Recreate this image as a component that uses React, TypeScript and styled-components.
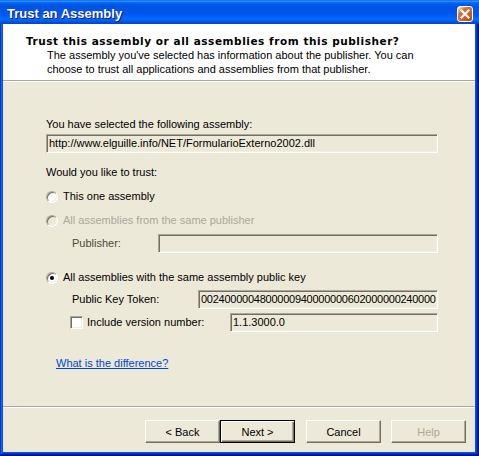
import React from "react";
import styled, { createGlobalStyle } from "styled-components";

const GlobalStyle = createGlobalStyle`
  html, body {
    margin: 0;
    padding: 0;
    background: #ece9d8;
  }
  body {
    font-family: "Liberation Sans", Arial, sans-serif;
    font-size: 11px;
    color: #000;
  }
`;

const Window = styled.div`
  width: 479px;
  height: 456px;
  display: flex;
  flex-direction: column;
  background: #0853dc;
  box-shadow: inset -1px -1px #00138c, inset 1px 0 #0831d9, inset -2px -2px #001ea0,
    inset 2px 0 #166aee, inset -3px -3px #003bda;
`;

const TitleBar = styled.div`
  height: 24px;
  flex: none;
  display: flex;
  align-items: center;
  justify-content: space-between;
  padding: 1px 6px 0 7px;
  box-sizing: border-box;
  background: linear-gradient(
    180deg,
    #0058ee 0%,
    #3593ff 4%,
    #288eff 6%,
    #127dff 8%,
    #036ffc 10%,
    #0262ee 14%,
    #0057e5 20%,
    #0054e3 24%,
    #0055eb 56%,
    #005bf5 66%,
    #026afe 76%,
    #0062ef 86%,
    #0052d6 92%,
    #0047c8 100%
  );
`;

const Caption = styled.span`
  font-family: "Liberation Sans", Arial, sans-serif;
  font-weight: bold;
  font-size: 13px;
  color: #fff;
  text-shadow: 1px 1px #0f1089;
  padding-top: 2px;
`;

const CloseButton = styled.div`
  width: 16px;
  height: 16px;
  box-sizing: border-box;
  border: 1px solid #fff;
  border-radius: 3px;
  background: radial-gradient(circle at 90% 90%, #cc4600 0%, #dc6527 55%, #cd7546 70%, #ffccb2 90%, #fff 100%);
  display: flex;
  align-items: center;
  justify-content: center;
  margin-top: 2px;
`;

const Dialog = styled.div`
  flex: 1;
  display: flex;
  flex-direction: column;
  margin: 0 4px 4px 3px;
  background: #ece9d8;
`;

const Header = styled.div`
  height: 56px;
  box-sizing: border-box;
  padding: 10px 0 0 23px;
  background: #fff;
  line-height: 14px;
`;

const HeaderTitle = styled.div`
  font-family: "DejaVu Sans", Verdana, sans-serif;
  font-weight: bold;
  font-size: 10.5px;
  letter-spacing: 0.55px;
`;

const HeaderText = styled.div`
  padding-left: 21px;
`;

const Separator = styled.div`
  height: 0;
  border-top: 1px solid #aca899;
  border-bottom: 1px solid #fff;
`;

const Content = styled.div`
  flex: 1;
  display: flex;
  flex-direction: column;
  padding-left: 43px;
  width: 392px;
`;

const Label = styled.div<{ $top: number }>`
  margin-top: ${(p) => p.$top}px;
  line-height: 13px;
`;

const Field = styled.div<{ $width: number; $tight?: boolean }>`
  width: ${(p) => p.$width}px;
  height: 19px;
  flex: none;
  box-sizing: border-box;
  border: 1px solid;
  border-color: #aca899 #fff #fff #aca899;
  box-shadow: inset 1px 1px #716f64, inset -1px -1px #f1efe2;
  padding: 0 2px;
  line-height: 17px;
  letter-spacing: ${(p) => (p.$tight ? "-0.25px" : "normal")};
  white-space: nowrap;
  overflow: hidden;
`;

const OptionRow = styled.label<{ $top: number; $disabled?: boolean }>`
  margin-top: ${(p) => p.$top}px;
  display: flex;
  align-items: center;
  gap: 5px;
  height: 13px;
  line-height: 13px;
  color: ${(p) => (p.$disabled ? "#aca899" : "#000")};
`;

const Radio = styled.span<{ $checked?: boolean; $disabled?: boolean }>`
  width: 12px;
  height: 12px;
  flex: none;
  box-sizing: border-box;
  border-radius: 50%;
  border: 1px solid;
  border-color: #aca899 #fff #fff #aca899;
  box-shadow: inset 1px 1px #716f64, inset -1px -1px #f1efe2;
  background: ${(p) => (p.$disabled ? "#ece9d8" : "#fff")};
  display: flex;
  align-items: center;
  justify-content: center;
  &::after {
    content: "";
    width: 4px;
    height: 4px;
    border-radius: 50%;
    background: ${(p) => (p.$checked ? "#000" : "transparent")};
  }
`;

const FieldRow = styled.div<{ $top: number }>`
  margin-top: ${(p) => p.$top}px;
  display: flex;
  align-items: center;
  padding-left: 26px;
  line-height: 13px;
  & > ${Field} {
    margin-left: auto;
  }
`;

const DimLabel = styled.span`
  color: #4b4b30;
`;

const Checkbox = styled.span`
  width: 13px;
  height: 13px;
  flex: none;
  box-sizing: border-box;
  margin-left: -2px;
  margin-right: 4px;
  border: 1px solid;
  border-color: #aca899 #fff #fff #aca899;
  box-shadow: inset 1px 1px #716f64, inset -1px -1px #f1efe2;
  background: #fff;
`;

const Link = styled.a`
  margin-top: 25px;
  margin-left: 10px;
  line-height: 13px;
  color: #0046d5;
  text-decoration: underline;
  cursor: pointer;
`;

const Footer = styled.div`
  display: flex;
  justify-content: flex-end;
  padding: 12px 9px 9px 0;
`;

const Button = styled.button<{ $default?: boolean; $gap?: number }>`
  width: 75px;
  height: 23px;
  margin-left: ${(p) => p.$gap ?? 0}px;
  padding: 0;
  font-family: "Liberation Sans", Arial, sans-serif;
  font-size: 11px;
  color: #000;
  background: #ece9d8;
  border: 1px solid;
  border-color: ${(p) => (p.$default ? "#000" : "#fff #716f64 #716f64 #fff")};
  box-shadow: ${(p) =>
    p.$default
      ? "inset 1px 1px #fff, inset -1px -1px #716f64, inset -2px -2px #aca899"
      : "inset -1px -1px #aca899"};
  &:disabled {
    color: #aca899;
  }
`;

const App: React.FC = () => {
  return (
    <>
      <GlobalStyle />
      <Window>
        <TitleBar>
          <Caption>Trust an Assembly</Caption>
          <CloseButton>
            <svg width="10" height="10" viewBox="0 0 10 10">
              <path d="M1.5 1.5 L8.5 8.5 M8.5 1.5 L1.5 8.5" stroke="#fff" strokeWidth="2.2" strokeLinecap="square" />
            </svg>
          </CloseButton>
        </TitleBar>
        <Dialog>
          <Header>
            <HeaderTitle>Trust this assembly or all assemblies from this publisher?</HeaderTitle>
            <HeaderText>
              The assembly you've selected has information about the publisher. You can
              <br />
              choose to trust all applications and assemblies from that publisher.
            </HeaderText>
          </Header>
          <Separator />
          <Content>
            <Label $top={36}>You have selected the following assembly:</Label>
            <Field $width={392} style={{ marginTop: 3 }}>
              http://www.elguille.info/NET/FormularioExterno2002.dll
            </Field>
            <Label $top={13}>Would you like to trust:</Label>
            <OptionRow $top={11}>
              <Radio />
              This one assembly
            </OptionRow>
            <OptionRow $top={11} $disabled>
              <Radio $disabled />
              All assemblies from the same publisher
            </OptionRow>
            <FieldRow $top={7}>
              <DimLabel>Publisher:</DimLabel>
              <Field $width={280} />
            </FieldRow>
            <OptionRow $top={18}>
              <Radio $checked />
              All assemblies with the same assembly public key
            </OptionRow>
            <FieldRow $top={6}>
              <span>Public Key Token:</span>
              <Field $width={240} $tight>
                0024000004800000940000000602000000240000
              </Field>
            </FieldRow>
            <FieldRow $top={4}>
              <Checkbox />
              <span>Include version number:</span>
              <Field $width={208}>1.1.3000.0</Field>
            </FieldRow>
            <Link>What is the difference?</Link>
          </Content>
          <Separator />
          <Footer>
            <Button>&lt; Back</Button>
            <Button $default>Next &gt;</Button>
            <Button $gap={11}>Cancel</Button>
            <Button $gap={10} disabled>
              Help
            </Button>
          </Footer>
        </Dialog>
      </Window>
    </>
  );
};

export default App;
